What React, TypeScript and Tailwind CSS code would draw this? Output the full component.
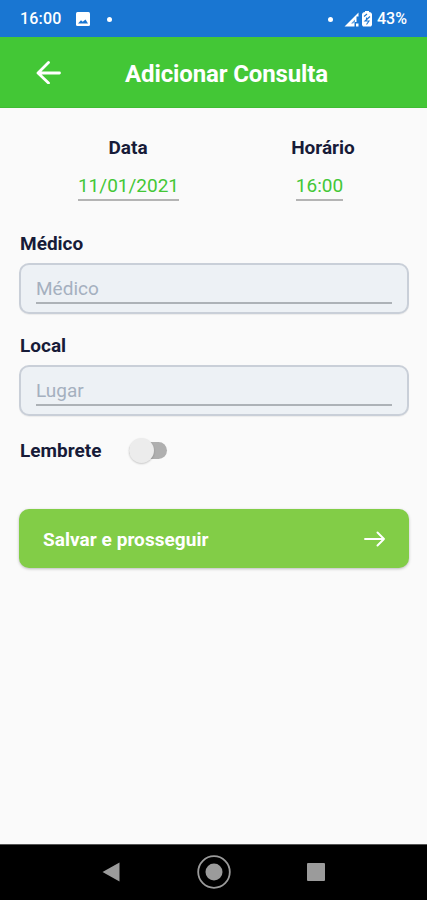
import { useState } from "react";

function StatusBar() {
  return (
    <div className="flex h-[37px] items-center bg-[#1976d2] pl-5 pr-[18px] pt-px text-[16px] font-medium text-white">
      <span className="w-[42px] whitespace-nowrap tracking-[0.2px]">16:00</span>
      <svg className="ml-[14px]" width="14" height="14" viewBox="0 0 14 14">
        <rect width="14" height="14" rx="1.5" fill="#fff" />
        <path d="M2 11.5 5 8.3l1.7 1.5L9.5 7.5 12 11.5z" fill="#1976d2" />
      </svg>
      <span className="ml-[17px] size-[5px] rounded-full bg-white" />
      <span className="ml-auto size-[5px] rounded-full bg-white" />
      <svg className="ml-[11px]" width="29" height="18" viewBox="0 0 29 18">
        <path d="M0.5 16.5 14.5 2.5v4h-2v5.500h-2v4.500z" fill="#fff" />
        <path d="M7 13.500 11 9.500v2l-2 2z" fill="#1976d2" opacity="0.7" />
        <rect x="12" y="13.5" width="2.5" height="3" fill="#fff" />
        <path d="M21 2V1h4v1l2 .5 1 1.500v11l-1 1.500h-8l-1-1.500V4l1-1.500z" fill="#fff" />
        <path d="M20 6.500 23 4M26 6.500 21 11h4l-2.500 3.500M22.500 7.500v2" fill="none" stroke="#1976d2" strokeWidth="1.100" />
      </svg>
      <span className="ml-[4px] w-[32px] whitespace-nowrap">43%</span>
    </div>
  );
}

function Header() {
  return (
    <header className="flex h-[71px] items-center border-b border-[#3fbc33] bg-[#43c736] pl-9">
      <button type="button" aria-label="Voltar">
        <svg width="25" height="24" viewBox="0 0 25 24" fill="none" stroke="#fff" strokeWidth="2.8" strokeLinecap="round" strokeLinejoin="round">
          <path d="M12.500 2.500 2 13l10.500 10M2.500 13h21" />
        </svg>
      </button>
      <h1 className="ml-16 mt-1 whitespace-nowrap text-[24px] font-bold leading-7 tracking-[-0.12px] text-white">Adicionar Consulta</h1>
    </header>
  );
}

function DateField({
  label,
  value,
  valueClass = ""
}: {
  label: string;
  value: string;
  valueClass?: string;
}) {
  return (
    <div className="flex flex-col items-center">
      <span className="text-[19px] font-bold leading-6 text-[#171b38]">{label}</span>
      <span className={`mt-[14px] h-[27px] border-b-2 border-[#b4b4b4] text-[19px] leading-6 text-[#43c736] ${valueClass}`}>{value}</span>
    </div>
  );
}

function TextField({
  label,
  placeholder,
  className
}: {
  label: string;
  placeholder: string;
  className: string;
}) {
  const [value, setValue] = useState("");

  return (
    <label className={className}>
      <span className="ml-px block text-[19px] font-bold leading-6 text-[#171b38]">{label}</span>
      <div className="mt-[7px] h-[51px] rounded-[10px] border-2 border-[#c9cfd8] bg-[#edf1f5] px-[15px] pt-[9px] shadow-[0_1px_1px_rgba(0,0,0,0.06)]">
        <input
          className="block h-[30px] w-full border-b-2 border-[#adb2b7] bg-transparent text-[19px] leading-6 text-[#171b38] outline-none placeholder:text-[#a5b0bf]"
          placeholder={placeholder}
          value={value}
          onChange={(event) => setValue(event.target.value)}
        />
      </div>
    </label>
  );
}

function NavBar() {
  return (
    <nav className="flex h-[56px] items-center border-t border-[#555] bg-black pb-px pl-[102px] pr-[102px]">
      <svg width="18" height="20" viewBox="0 0 18 20">
        <path d="M0.500 10 17.500 0.500v19z" fill="#9b9b9b" />
      </svg>
      <svg className="ml-[77px]" width="34" height="34" viewBox="0 0 34 34">
        <circle cx="17" cy="17" r="15.800" fill="none" stroke="#9b9b9b" strokeWidth="1.800" />
        <circle cx="17" cy="17" r="8.500" fill="#9b9b9b" />
      </svg>
      <span className="ml-auto size-[18px] rounded-[1px] bg-[#9b9b9b]" />
    </nav>
  );
}

export default function App() {
  const [reminder, setReminder] = useState(false);

  return (
    <div className="flex h-[900px] w-[427px] flex-col overflow-hidden bg-[#fafafa] font-['Roboto',sans-serif]">
      <StatusBar />
      <Header />
      <main className="flex flex-1 flex-col pl-[19px] pr-[18px]">
        <div className="mt-[28px] grid grid-cols-[218px_1fr]">
          <DateField label="Data" value="11/01/2021" valueClass="ml-px" />
          <DateField label="Horário" value="16:00" valueClass="mr-[7px]" />
        </div>

        <TextField className="mt-[31px] block" label="Médico" placeholder="Médico" />
        <TextField className="mt-5 block" label="Local" placeholder="Lugar" />

        <div className="mt-5 flex h-[28px] items-center">
          <span className="ml-px w-[109px] pt-px text-[19px] font-bold leading-6 text-[#171b38]">Lembrete</span>
          <button
            className="flex h-[17px] w-[38px] items-center rounded-full bg-[#afafaf]"
            type="button"
            role="switch"
            aria-checked={reminder}
            aria-label="Lembrete"
            onClick={() => setReminder(!reminder)}
          >
            <span className={`size-[25px] shrink-0 rounded-full bg-[#ececec] shadow-[0_1px_2px_rgba(0,0,0,0.2)] ${reminder ? "ml-auto" : ""}`} />
          </button>
        </div>

        <button
          className="mt-[45px] flex h-[59px] items-center justify-between rounded-[10px] bg-[#82cd47] pl-6 pr-6 text-white shadow-[0_1px_3px_rgba(0,0,0,0.25)]"
          type="button"
        >
          <span className="mt-[3px] text-[19px] font-bold leading-6 tracking-[0.05px]">Salvar e prosseguir</span>
          <svg width="21" height="16" viewBox="0 0 21 16" fill="none" stroke="#fff" strokeWidth="1.900" strokeLinecap="round" strokeLinejoin="round">
            <path d="M1 8h19M13.500 1.500 20 8l-6.500 6.500" />
          </svg>
        </button>
      </main>
      <NavBar />
    </div>
  );
}
